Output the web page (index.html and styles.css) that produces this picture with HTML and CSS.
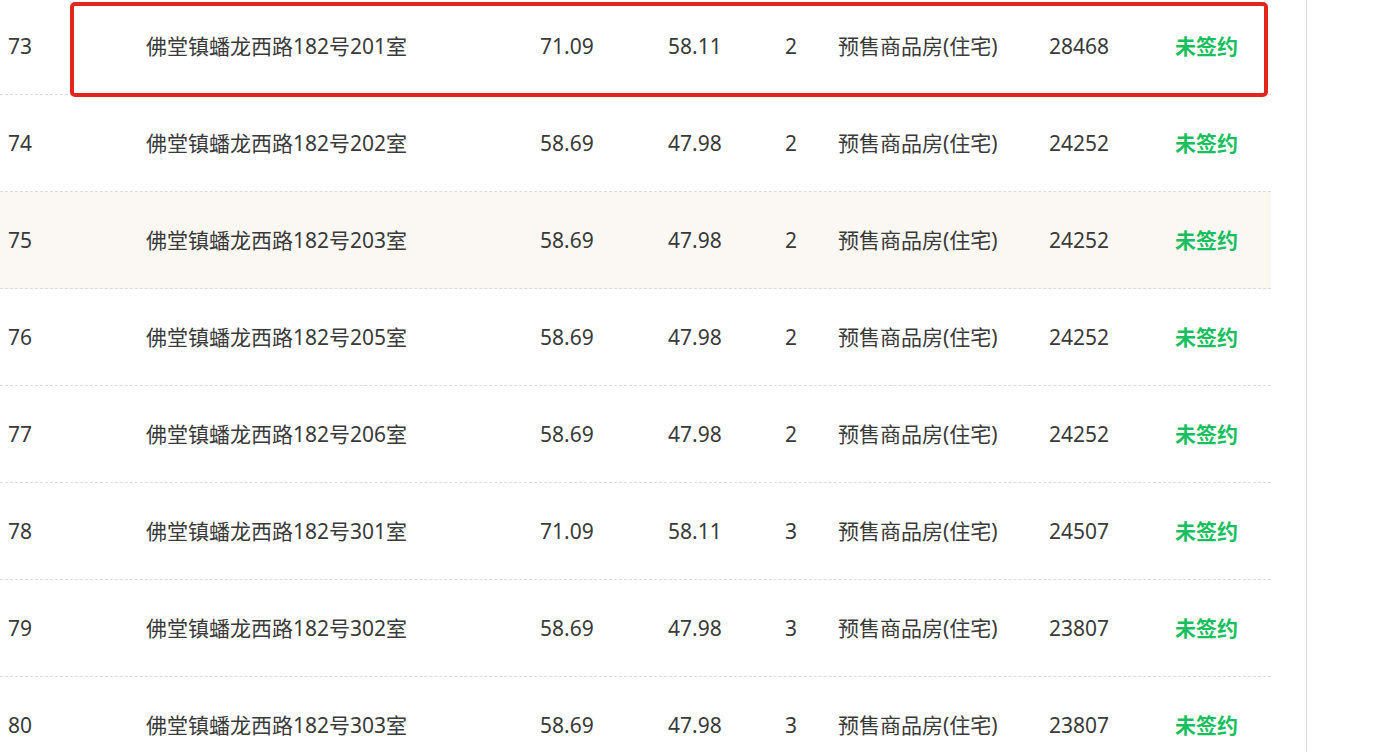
FILE: index.html
```html
<!DOCTYPE html>
<html lang="zh-CN">
<head>
<meta charset="utf-8">
<title>房源列表</title>
<link rel="stylesheet" href="styles.css">
</head>
<body>
<div class="page">
  <div class="table">
    <div class="row"><div class="c c-no">73</div><div class="c c-addr">佛堂镇蟠龙西路182号201室</div><div class="c c-a1">71.09</div><div class="c c-a2">58.11</div><div class="c c-fl">2</div><div class="c c-type">预售商品房(住宅)</div><div class="c c-price">28468</div><div class="c c-st">未签约</div></div>
    <div class="row"><div class="c c-no">74</div><div class="c c-addr">佛堂镇蟠龙西路182号202室</div><div class="c c-a1">58.69</div><div class="c c-a2">47.98</div><div class="c c-fl">2</div><div class="c c-type">预售商品房(住宅)</div><div class="c c-price">24252</div><div class="c c-st">未签约</div></div>
    <div class="row row-hover"><div class="c c-no">75</div><div class="c c-addr">佛堂镇蟠龙西路182号203室</div><div class="c c-a1">58.69</div><div class="c c-a2">47.98</div><div class="c c-fl">2</div><div class="c c-type">预售商品房(住宅)</div><div class="c c-price">24252</div><div class="c c-st">未签约</div></div>
    <div class="row"><div class="c c-no">76</div><div class="c c-addr">佛堂镇蟠龙西路182号205室</div><div class="c c-a1">58.69</div><div class="c c-a2">47.98</div><div class="c c-fl">2</div><div class="c c-type">预售商品房(住宅)</div><div class="c c-price">24252</div><div class="c c-st">未签约</div></div>
    <div class="row"><div class="c c-no">77</div><div class="c c-addr">佛堂镇蟠龙西路182号206室</div><div class="c c-a1">58.69</div><div class="c c-a2">47.98</div><div class="c c-fl">2</div><div class="c c-type">预售商品房(住宅)</div><div class="c c-price">24252</div><div class="c c-st">未签约</div></div>
    <div class="row"><div class="c c-no">78</div><div class="c c-addr">佛堂镇蟠龙西路182号301室</div><div class="c c-a1">71.09</div><div class="c c-a2">58.11</div><div class="c c-fl">3</div><div class="c c-type">预售商品房(住宅)</div><div class="c c-price">24507</div><div class="c c-st">未签约</div></div>
    <div class="row"><div class="c c-no">79</div><div class="c c-addr">佛堂镇蟠龙西路182号302室</div><div class="c c-a1">58.69</div><div class="c c-a2">47.98</div><div class="c c-fl">3</div><div class="c c-type">预售商品房(住宅)</div><div class="c c-price">23807</div><div class="c c-st">未签约</div></div>
    <div class="row"><div class="c c-no">80</div><div class="c c-addr">佛堂镇蟠龙西路182号303室</div><div class="c c-a1">58.69</div><div class="c c-a2">47.98</div><div class="c c-fl">3</div><div class="c c-type">预售商品房(住宅)</div><div class="c c-price">23807</div><div class="c c-st">未签约</div></div>
  </div>
  <div class="gap"></div>
  <div class="side"></div>
  <div class="mark"></div>
</div>
</body>
</html>
```

FILE: styles.css
```css
html, body {
  margin: 0;
  padding: 0;
  background: #fff;
  overflow: hidden;
}
body {
  width: 1384px;
  height: 752px;
  font-family: "Noto Sans", "Noto Sans CJK SC", sans-serif;
  font-size: 21px;
  color: #3a3a3a;
}
.page {
  position: relative;
  display: flex;
  height: 752px;
}
.table {
  width: 1271px;
  flex: none;
  margin-top: -2px;
}
.row {
  display: grid;
  grid-template-columns: 146px 394px 128px 117px 53px 211px 126px 1fr;
  align-items: center;
  height: 96px;
  border-bottom: 1px dashed #dcdcdc;
}
.row-hover {
  background: #fbf8f4;
}
.c {
  white-space: nowrap;
  line-height: 1;
}
.c-no { padding-left: 8px; }
.c-st {
  color: #19be5f;
  font-weight: 700;
}
.gap {
  width: 35px;
  flex: none;
}
.side {
  flex: 1;
  border-left: 1px solid #dcdcdc;
}
.mark {
  position: absolute;
  left: 70px;
  top: 2px;
  width: 1190px;
  height: 87px;
  border: 4px solid #e2261d;
  border-radius: 5px;
}
```
